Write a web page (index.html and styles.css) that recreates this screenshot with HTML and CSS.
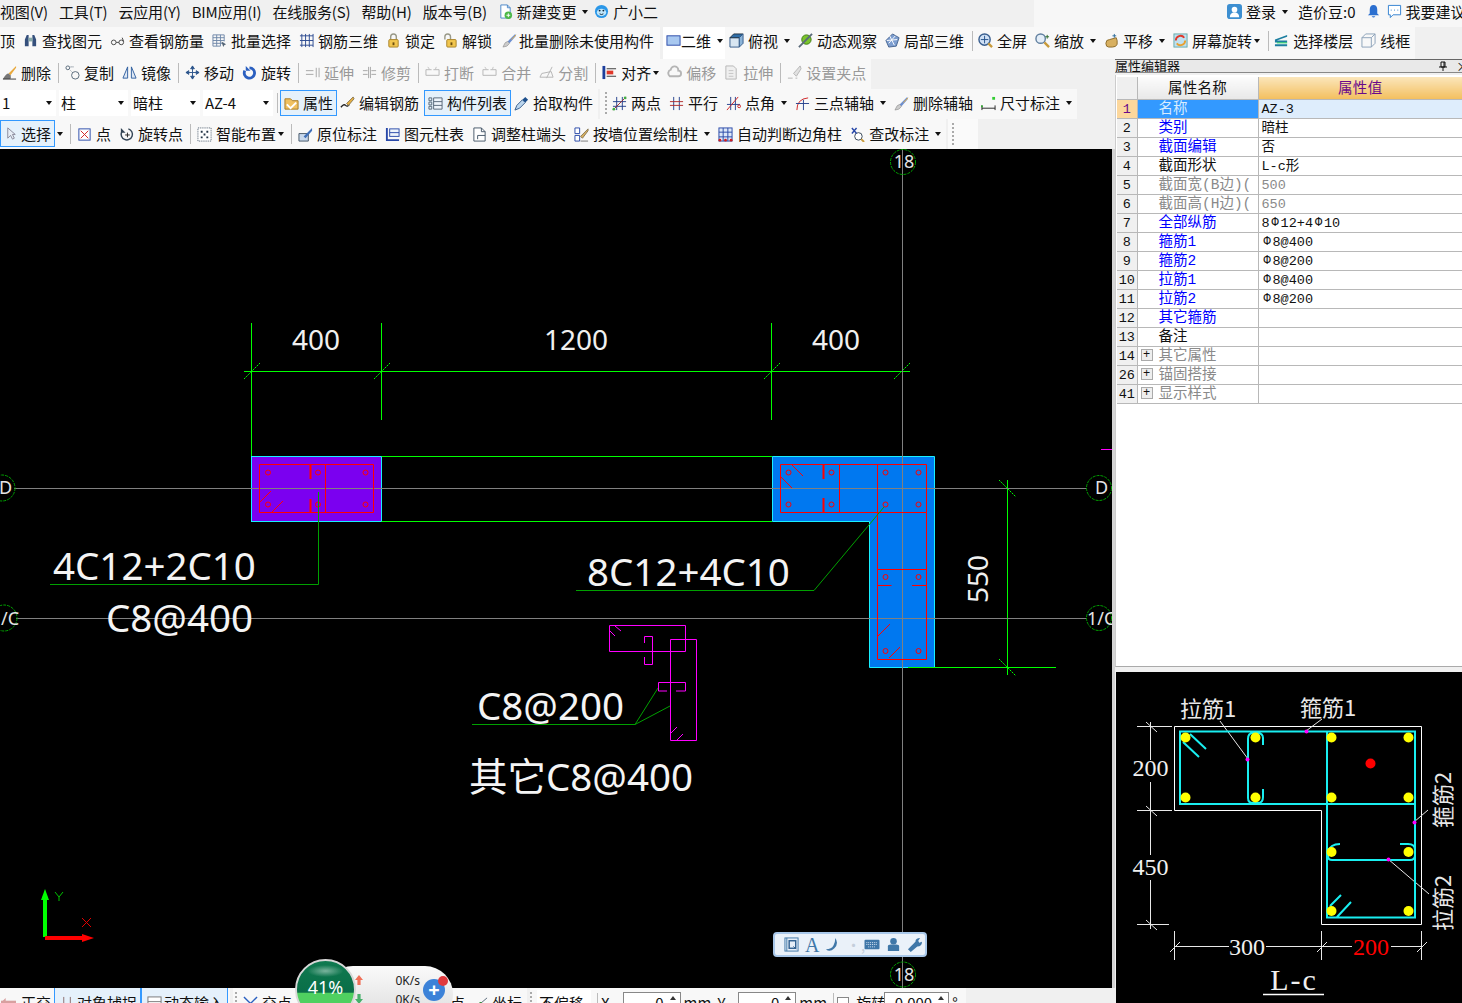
FILE: index.html
```html
<!DOCTYPE html>
<html lang="zh">
<head>
<meta charset="utf-8">
<title>属性编辑器</title>
<link rel="stylesheet" href="styles.css">
</head>
<body>
<svg class="defs" aria-hidden="true">
  <symbol id="newdoc" viewBox="0 0 16 16"><path d="M3 1h7l3 3v11H3z" fill="#fff" stroke="#4a86c8"/><path d="M10 1v3h3" fill="none" stroke="#4a86c8"/><circle cx="11" cy="12" r="4" fill="#4cb848"/><path d="M9 12h4M11 10v4" stroke="#fff"/></symbol>
  <symbol id="bot" viewBox="0 0 16 16"><circle cx="8" cy="8" r="7" fill="#2a97e8"/><ellipse cx="8" cy="9" rx="5" ry="4" fill="#bfe6fb"/><circle cx="6" cy="7" r="1" fill="#123"/><circle cx="10" cy="7" r="1" fill="#123"/><path d="M6 10.500q2 1.500 4 0" stroke="#123" fill="none"/></symbol>
  <symbol id="user" viewBox="0 0 16 16"><rect x="0" y="0" width="16" height="16" rx="3" fill="#3d8fd1"/><circle cx="8" cy="6" r="3" fill="#fff"/><path d="M3 14q0-5 5-5t5 5z" fill="#fff"/></symbol>
  <symbol id="bell" viewBox="0 0 16 16"><path d="M8 1q4 0 4 5v4l2 2H2l2-2V6q0-5 4-5z" fill="#2b6fd0"/><path d="M6 13q2 3 4 0z" fill="#2b6fd0"/></symbol>
  <symbol id="chat" viewBox="0 0 16 16"><path d="M1.500 1.500h13v10h-8l-3 3v-3h-2z" fill="#fff" stroke="#2f7fd0"/><path d="M4 6.500h1M7.500 6.500h1M11 6.500h1" stroke="#2f7fd0"/></symbol>
  <symbol id="find" viewBox="0 0 16 16"><path d="M2 14V7l2-5h2v12zM14 14V7l-2-5h-2v12z" fill="#35507c"/><rect x="6" y="5" width="4" height="4" fill="#8aa"/></symbol>
  <symbol id="glasses" viewBox="0 0 16 16"><circle cx="4" cy="10" r="2.500" fill="none" stroke="#444"/><circle cx="12" cy="10" r="2.500" fill="none" stroke="#444"/><path d="M6.500 10h3M13 5l1.500 4" stroke="#444"/></symbol>
  <symbol id="batch" viewBox="0 0 16 16"><path d="M1 2h12M1 5h12M1 8h12M1 11h12M1 14h8M1 2v12M5 2v12M9 2v12M13 2v7" stroke="#6e86a8" fill="none"/><path d="M10 9l5 3-2 1-1 2z" fill="#567"/></symbol>
  <symbol id="rebar3d" viewBox="0 0 16 16"><path d="M1 3h14M1 8h14M1 13h14M3 1v14M7 1v14M11 1v14M15 1v14" stroke="#2c4a90" fill="none"/></symbol>
  <symbol id="lock" viewBox="0 0 16 16"><path d="M5 7V4q0-3 3-3t3 3v3" fill="none" stroke="#998"  stroke-width="1.500"/><rect x="3" y="7" width="10" height="8" rx="1" fill="#f2c64e" stroke="#a8822a"/><rect x="7" y="10" width="2" height="3" fill="#6b4e10"/></symbol>
  <symbol id="unlock" viewBox="0 0 16 16"><path d="M2 7V4q0-3 3-3t3 3v3" fill="none" stroke="#998" stroke-width="1.500"/><rect x="4" y="7" width="10" height="8" rx="1" fill="#f2c64e" stroke="#a8822a"/><rect x="8" y="10" width="2" height="3" fill="#6b4e10"/></symbol>
  <symbol id="brush" viewBox="0 0 16 16"><path d="M14 1L6 9l2 2 7-8z" fill="#6d8fd0"/><path d="M15 2l-5 5" stroke="#e8b040"/><path d="M6 9q-3 0-5 6 5 0 7-4z" fill="#ccc" stroke="#777" stroke-width=".5"/></symbol>
  <symbol id="del" viewBox="0 0 16 16"><path d="M15 1L7 9l2 2 6-8z" fill="#e8a83c"/><path d="M7 9q-3 0-6 6h8q1-2 0-4z" fill="#777"/><path d="M1 15h14" stroke="#333"/></symbol>
  <symbol id="rect2d" viewBox="0 0 16 16"><rect x="1" y="3" width="14" height="10" fill="#a8c8f0" stroke="#2848a8"/></symbol>
  <symbol id="cube" viewBox="0 0 16 16"><path d="M1 5h10v10H1z" fill="#d8e6f2" stroke="#345c8a"/><path d="M1 5l4-4h10l-4 4z" fill="#2f6ea8" stroke="#234"/><path d="M11 5l4-4v10l-4 4z" fill="#8cb4d8" stroke="#345c8a"/></symbol>
  <symbol id="orbit" viewBox="0 0 16 16"><circle cx="9" cy="7" r="5" fill="#7ac52c" stroke="#3e7a12"/><path d="M1 15L15 1" stroke="#5a6a7a" stroke-width="2"/></symbol>
  <symbol id="local3d" viewBox="0 0 16 16"><path d="M8 1l7 4-3 9-8 1-3-7z" fill="#7d9ed0" stroke="#46648f"/><path d="M5 3l5 10M11 3L4 11M2 8l11-1" stroke="#fff"/></symbol>
  <symbol id="fit" viewBox="0 0 16 16"><circle cx="7" cy="7" r="6" fill="#cfe0f5" stroke="#3a5f8f" stroke-width="1.500"/><path d="M7 3v8M3 7h8" stroke="#24508a"/><path d="M11 11l4 4" stroke="#c89a3a" stroke-width="2.500"/></symbol>
  <symbol id="zoom" viewBox="0 0 16 16"><circle cx="6" cy="6" r="5" fill="#e4eef8" stroke="#607f9f" stroke-width="1.500"/><path d="M10 10l5 5" stroke="#c89a3a" stroke-width="2.500"/><path d="M13 2v4M11 4h4" stroke="#2a6a2a"/></symbol>
  <symbol id="pan" viewBox="0 0 16 16"><path d="M2 11q0-4 4-4l7-2 1 3v4q-1 3-5 3H5q-3 0-3-4z" fill="#d8b060" stroke="#8a6a2a"/><path d="M11 1v4M9 3h4" stroke="#2a6a9a"/></symbol>
  <symbol id="rotscreen" viewBox="0 0 16 16"><rect x="1" y="1" width="14" height="14" fill="#bfe0f0" stroke="#6aa"/><path d="M3 8a5 5 0 0 1 9-3" fill="none" stroke="#e0382a" stroke-width="2"/><path d="M13 8a5 5 0 0 1-9 3" fill="none" stroke="#e8a030" stroke-width="2"/></symbol>
  <symbol id="floors" viewBox="0 0 16 16"><path d="M1 7l13-5v2L3 8h11v2H1zM1 12h13v2H1z" fill="#1d7fa0"/><path d="M3 10.500h11" stroke="#1c5"/></symbol>
  <symbol id="wire" viewBox="0 0 16 16"><path d="M1 5h10v10H1zM1 5l4-4h10v10l-4 4M11 5l4-4" fill="none" stroke="#8aa0b8"/></symbol>
  <symbol id="copy" viewBox="0 0 16 16"><circle cx="3" cy="3" r="2" fill="none" stroke="#567"/><circle cx="11" cy="11" r="4" fill="none" stroke="#567"/><path d="M6 2h3M6 6l2 2" stroke="#567" stroke-dasharray="1 1"/></symbol>
  <symbol id="mirror" viewBox="0 0 16 16"><path d="M6 2L1 14h5zM10 2l5 12h-5z" fill="#dfe8f4" stroke="#2f5f9f"/></symbol>
  <symbol id="move" viewBox="0 0 16 16"><path d="M8 1v14M1 8h14M8 1L6 4h4zM8 15l-2-3h4zM1 8l3-2v4zM15 8l-3-2v4z" stroke="#2d558c" fill="#2d558c"/></symbol>
  <symbol id="rot" viewBox="0 0 16 16"><path d="M8 3a5.500 5.500 0 1 1-5 3" fill="none" stroke="#2a5fc0" stroke-width="3"/><path d="M4 1v5h5z" fill="#2a5fc0"/></symbol>
  <symbol id="extend" viewBox="0 0 16 16"><path d="M1 6h8M1 10h8M12 3v10M15 3v10" stroke="#999"/></symbol>
  <symbol id="trim" viewBox="0 0 16 16"><path d="M1 6h5M1 10h5M10 6h5M10 10h5M7 2v12M9 2v12" stroke="#999"/></symbol>
  <symbol id="brk" viewBox="0 0 16 16"><path d="M1 5h6M9 5h6M1 11h14M1 5v6M15 5v6" stroke="#aaa" fill="none"/><path d="M3 2l2 3M12 2l-1 3" stroke="#bbb"/></symbol>
  <symbol id="split" viewBox="0 0 16 16"><path d="M1 13h14L13 7 3 9zM8 14L14 2" stroke="#aaa" fill="none"/></symbol>
  <symbol id="align" viewBox="0 0 16 16"><path d="M2 1v14" stroke="#1d3f9c" stroke-width="3"/><path d="M5 4h10M5 12h10" stroke="#333"/><rect x="5" y="6" width="7" height="4" fill="#e0382a"/></symbol>
  <symbol id="offset" viewBox="0 0 16 16"><path d="M3 12a4 4 0 0 1 1-7 4 4 0 0 1 8 1 3 3 0 0 1 0 6z" fill="none" stroke="#aaa" stroke-width="2"/></symbol>
  <symbol id="stretch" viewBox="0 0 16 16"><path d="M2 1h8l3 3v11H2z" fill="#eee" stroke="#aaa"/><path d="M5 6h5M5 9h5M5 12h5" stroke="#bbb"/></symbol>
  <symbol id="setgrip" viewBox="0 0 16 16"><path d="M1 14h5M9 14h2" stroke="#aaa"/><path d="M14 1L7 9l3 3 5-8z" fill="#ddd" stroke="#aaa"/></symbol>
  <symbol id="attr" viewBox="0 0 16 16"><path d="M1 3h6l2 2h6v9H1z" fill="#f0c060" stroke="#a87a22"/><path d="M3 9l4 4 6-6" stroke="#fff" fill="none" stroke-width="2"/></symbol>
  <symbol id="editbar" viewBox="0 0 16 16"><path d="M1 12q3-4 5-2t4-1" fill="none" stroke="#222" stroke-width="1.500"/><path d="M14 1L7 8l2 2 6-7z" fill="#e8b040" stroke="#875"/></symbol>
  <symbol id="list" viewBox="0 0 16 16"><path d="M1 2h3v3H1zM1 6.500h3v3H1zM1 11h3v3H1z" fill="none" stroke="#567"/><path d="M6 2h9v12H6zM6 6h9M6 10h9" fill="#eef4fb" stroke="#567"/></symbol>
  <symbol id="pick" viewBox="0 0 16 16"><path d="M1 15l2-5 6-6 3 3-6 6z" fill="#bcd6ee" stroke="#345c8a"/><path d="M9 4l3-3 3 3-3 3z" fill="#1d4f8c"/></symbol>
  <symbol id="twopt" viewBox="0 0 16 16"><path d="M5 1v14M11 1v14M1 6h14M1 11h14" stroke="#23408c"/><path d="M1 15L15 1" stroke="#9c2a2a"/><circle cx="2" cy="14" r="1.500" fill="#4a4"/><circle cx="14" cy="2" r="1.500" fill="#4a4"/></symbol>
  <symbol id="parallel" viewBox="0 0 16 16"><path d="M5 1v14M11 1v14" stroke="#23408c"/><path d="M1 6h14M1 10h14" stroke="#b02a2a"/></symbol>
  <symbol id="ptangle" viewBox="0 0 16 16"><path d="M5 1v14M10 1v14M1 9h14" stroke="#23408c"/><path d="M1 15L13 1" stroke="#d02020"/><circle cx="14" cy="11" r="1.500" fill="none" stroke="#d02020"/></symbol>
  <symbol id="threept" viewBox="0 0 16 16"><path d="M2 15q0-12 12-13" fill="none" stroke="#d02020"/><path d="M1 8h14M9 4v11" stroke="#23408c"/></symbol>
  <symbol id="dim" viewBox="0 0 16 16"><path d="M1 10v5M15 10v5M1 13h14" stroke="#222"/><rect x="0" y="10" width="2" height="2" fill="#3a3"/><rect x="12" y="1" width="3" height="3" fill="#3c3"/></symbol>
  <symbol id="sel" viewBox="0 0 16 16"><path d="M4 2v11l3-3 2 4 2-1-2-4h3z" fill="#e8eef6" stroke="#889"/></symbol>
  <symbol id="pt" viewBox="0 0 16 16"><rect x="2" y="2" width="12" height="12" fill="#fff" stroke="#2848a8"/><path d="M4 4l8 8M12 4l-8 8" stroke="#d02020"/></symbol>
  <symbol id="rotpt" viewBox="0 0 16 16"><path d="M10 2a6 6 0 1 1-7 3" fill="none" stroke="#345" stroke-width="1.500"/><path d="M2 1v5h5z" fill="#345"/><path d="M9 6v5M6.500 8.500h5" stroke="#222"/></symbol>
  <symbol id="smart" viewBox="0 0 16 16"><rect x="1" y="1" width="14" height="14" fill="#fff" stroke="#456" stroke-dasharray="1 1"/><path d="M4 4h2v2H4zM10 4h2v2h-2zM4 10h2v2H4zM10 10h2v2h-2zM7 7h2v2H7z" fill="#234"/></symbol>
  <symbol id="inplace" viewBox="0 0 16 16"><path d="M1 7h10v8H1z" fill="#c8d8ec" stroke="#456"/><path d="M15 1L6 10l2 2 7-8z" fill="#3f6fb8"/></symbol>
  <symbol id="table" viewBox="0 0 16 16"><path d="M2 1v13h13" fill="none" stroke="#2848a8" stroke-width="2"/><rect x="5" y="2" width="10" height="8" fill="#eef4fb" stroke="#2848a8"/><path d="M5 6h10" stroke="#2848a8"/></symbol>
  <symbol id="adjust" viewBox="0 0 16 16"><path d="M2 1h8l4 4v10H2z" fill="#fff" stroke="#456"/><path d="M10 1v4h4M14 9H6v4" fill="none" stroke="#456"/></symbol>
  <symbol id="wallpos" viewBox="0 0 16 16"><path d="M1 1h5v6H1zM1 9h5v6H1z" fill="#fff" stroke="#2848a8"/><path d="M7 15h8" stroke="#777"/><path d="M15 2L7 10l2 2 6-8z" fill="#d8b060" stroke="#875"/></symbol>
  <symbol id="auto" viewBox="0 0 16 16"><rect x="1" y="1" width="14" height="14" fill="#dde8f8" stroke="#2848a8"/><path d="M5.500 1v14M10.500 1v14M1 5.500h14M1 10.500h14" stroke="#2848a8"/><circle cx="2" cy="14" r="1.500" fill="#d02020"/><circle cx="8" cy="14" r="1.500" fill="#d02020"/><circle cx="14" cy="14" r="1.500" fill="#d02020"/></symbol>
  <symbol id="check" viewBox="0 0 16 16"><circle cx="9" cy="10" r="4" fill="#fff" stroke="#345"/><path d="M12 13l3 3" stroke="#c89a3a" stroke-width="2"/><path d="M2 1l5 6M7 1L2 7" stroke="#2848a8" stroke-width="1.500"/></symbol>
  <symbol id="ortho" viewBox="0 0 16 16"><path d="M0 5h16v5H0z" fill="#d8a0a0"/><path d="M0 7l5-5v11z" fill="#d8a0a0"/></symbol>
  <symbol id="snap" viewBox="0 0 16 16"><path d="M4 1v14M11 1v14" stroke="#8a6a6a"/><path d="M1 12h14" stroke="#a03030"/></symbol>
  <symbol id="dyn" viewBox="0 0 16 16"><rect x="1" y="1" width="14" height="14" fill="#fff" stroke="#777"/><path d="M1 6h14" stroke="#777"/></symbol>
  <symbol id="cross" viewBox="0 0 16 16"><path d="M1 1l14 14M15 1L1 15" stroke="#2a5fc0" stroke-width="1.500"/></symbol>
  <symbol id="mid" viewBox="0 0 16 16"><path d="M1 14L15 2" stroke="#567"/><circle cx="8" cy="8" r="1.500" fill="#2a8a2a"/></symbol>
</svg>

<div class="app">
  <div class="menubar">
    <nav class="menu">
      <span>视图(V)</span><span>工具(T)</span><span>云应用(Y)</span><span>BIM应用(I)</span><span>在线服务(S)</span><span>帮助(H)</span><span>版本号(B)</span>
      <span class="it m-new"><svg class="ic"><use href="#newdoc"/></svg>新建变更<i class="caret"></i></span>
      <span class="it"><svg class="ic"><use href="#bot"/></svg>广小二</span>
    </nav>
    <div class="account">
      <span class="it"><svg class="ic"><use href="#user"/></svg>登录<i class="caret"></i></span>
      <span>造价豆:0</span>
      <svg class="ic a-bell"><use href="#bell"/></svg>
      <span class="it"><svg class="ic"><use href="#chat"/></svg>我要建议</span>
    </div>
  </div>

  <div class="tb tb-view">
    <div class="band">
      <span class="it">顶</span>
      <span class="it"><svg class="ic"><use href="#find"/></svg>查找图元</span>
      <span class="it"><svg class="ic"><use href="#glasses"/></svg>查看钢筋量</span>
      <span class="it"><svg class="ic"><use href="#batch"/></svg>批量选择</span>
      <span class="it"><svg class="ic"><use href="#rebar3d"/></svg>钢筋三维</span>
      <span class="it"><svg class="ic"><use href="#lock"/></svg>锁定</span>
      <span class="it"><svg class="ic"><use href="#unlock"/></svg>解锁</span>
      <span class="it narrow"><svg class="ic"><use href="#brush"/></svg>批量删除未使用构件</span>
    </div>
    <div class="band">
      <span class="it white"><svg class="ic"><use href="#rect2d"/></svg>二维<i class="caret"></i></span>
      <span class="it"><svg class="ic"><use href="#cube"/></svg>俯视<i class="caret"></i></span>
      <span class="it"><svg class="ic"><use href="#orbit"/></svg>动态观察</span>
      <span class="it"><svg class="ic"><use href="#local3d"/></svg>局部三维</span>
      <i class="sep"></i>
      <span class="it"><svg class="ic"><use href="#fit"/></svg>全屏</span>
      <span class="it"><svg class="ic"><use href="#zoom"/></svg>缩放<i class="caret"></i></span>
      <span class="it"><svg class="ic"><use href="#pan"/></svg>平移<i class="caret"></i></span>
      <span class="it"><svg class="ic"><use href="#rotscreen"/></svg>屏幕旋转<i class="caret tight"></i></span>
      <i class="sep"></i>
      <span class="it"><svg class="ic"><use href="#floors"/></svg>选择楼层</span>
      <span class="it"><svg class="ic"><use href="#wire"/></svg>线框</span>
    </div>
  </div>

  <div class="work">
    <div class="left">
      <div class="tb tb-edit">
        <div class="band">
          <span class="it"><svg class="ic"><use href="#del"/></svg>删除</span><i class="sep"></i>
          <span class="it"><svg class="ic"><use href="#copy"/></svg>复制</span>
          <span class="it"><svg class="ic"><use href="#mirror"/></svg>镜像</span><i class="sep"></i>
          <span class="it"><svg class="ic"><use href="#move"/></svg>移动</span>
          <span class="it"><svg class="ic"><use href="#rot"/></svg>旋转</span><i class="sep"></i>
          <span class="it off"><svg class="ic"><use href="#extend"/></svg>延伸</span>
          <span class="it off"><svg class="ic"><use href="#trim"/></svg>修剪</span><i class="sep"></i>
          <span class="it off"><svg class="ic"><use href="#brk"/></svg>打断</span>
          <span class="it off"><svg class="ic"><use href="#brk"/></svg>合并</span>
          <span class="it off"><svg class="ic"><use href="#split"/></svg>分割</span><i class="sep"></i>
          <span class="it"><svg class="ic"><use href="#align"/></svg>对齐<i class="caret tight"></i></span>
          <span class="it off"><svg class="ic"><use href="#offset"/></svg>偏移</span>
          <span class="it off"><svg class="ic"><use href="#stretch"/></svg>拉伸</span><i class="sep"></i>
          <span class="it off"><svg class="ic"><use href="#setgrip"/></svg>设置夹点</span>
        </div>
      </div>

      <div class="tb tb-comp">
        <div class="band band-a">
          <span class="pick p1">1<i class="caret"></i></span>
          <span class="pick p2">柱<i class="caret"></i></span>
          <span class="pick p2">暗柱<i class="caret"></i></span>
          <span class="pick p3">AZ-4<i class="caret"></i></span>
          <i class="sep"></i>
          <span class="it btn"><svg class="ic"><use href="#attr"/></svg>属性</span>
          <span class="it"><svg class="ic"><use href="#editbar"/></svg>编辑钢筋</span>
          <span class="it btn btn-list"><svg class="ic"><use href="#list"/></svg>构件列表</span>
          <span class="it"><svg class="ic"><use href="#pick"/></svg>拾取构件</span>
        </div>
        <div class="band band-b">
          <i class="grip"></i>
          <span class="it"><svg class="ic"><use href="#twopt"/></svg>两点</span>
          <span class="it"><svg class="ic"><use href="#parallel"/></svg>平行</span>
          <span class="it"><svg class="ic"><use href="#ptangle"/></svg>点角<i class="caret"></i></span>
          <span class="it"><svg class="ic"><use href="#threept"/></svg>三点辅轴<i class="caret"></i></span>
          <span class="it"><svg class="ic"><use href="#brush"/></svg>删除辅轴</span>
          <span class="it"><svg class="ic"><use href="#dim"/></svg>尺寸标注<i class="caret"></i></span>
        </div>
      </div>

      <div class="tb tb-draw">
        <div class="band">
          <span class="it btn btn-sel"><svg class="ic"><use href="#sel"/></svg>选择</span><i class="caret solo"></i><i class="sep"></i>
          <span class="it"><svg class="ic"><use href="#pt"/></svg>点</span>
          <span class="it"><svg class="ic"><use href="#rotpt"/></svg>旋转点</span><i class="sep"></i>
          <span class="it"><svg class="ic"><use href="#smart"/></svg>智能布置<i class="caret tight"></i></span><i class="sep"></i>
          <span class="it"><svg class="ic"><use href="#inplace"/></svg>原位标注</span>
          <span class="it"><svg class="ic"><use href="#table"/></svg>图元柱表</span>
          <span class="it"><svg class="ic"><use href="#adjust"/></svg>调整柱端头</span>
          <span class="it"><svg class="ic"><use href="#wallpos"/></svg>按墙位置绘制柱<i class="caret"></i></span>
          <span class="it"><svg class="ic"><use href="#auto"/></svg>自动判断边角柱</span>
          <span class="it"><svg class="ic"><use href="#check"/></svg>查改标注<i class="caret"></i></span>
        </div>
        <div class="band band-grip"><i class="grip"></i></div>
      </div>

      <div class="canvas">
        <svg class="cad" viewBox="0 149 1112 839" aria-label="柱截面图">
          <g class="c-fill-p"><rect x="251.500" y="456.500" width="130" height="65"/></g>
          <path class="c-fill-b" d="M772.500 456.500H934.500V667.500H869.500V521.500H772.500Z"/>
          <path class="c-green" d="M251.500 323V456M381.500 323V420M771.500 323V420M902.500 320V464M244 371.500H910M381.500 456.500H772M381.500 521.500H772M909 488.500H1056M908 667.500H1056M1007.500 480V675"/>
          <path class="c-green-t" d="M244 379L260 363M374 379L390 363M764 379L780 363M894 379L910 363M999 480L1016 497M999 659L1016 676"/>
          <path class="c-axis" d="M902.500 149V988M14 488.500H1087M16 618.500H1087"/>
          <path class="c-red" d="M259.500 464.500H373.500V512.500H259.500ZM325.500 464.500V512.500M260 502L271 491M272 512L283 501M780.500 464.500H926.500V512.500H780.500ZM877.500 464.500V659.500H926.500V512.500M839.500 464.500V512.500M877.500 569.500H926.500M877.500 585.500H891.500M912 585.500H926.500M792 465L803 476M781 477L792 488M878 636L890 624M889 658L900 647"/>
          <path class="c-red2" d="M310.500 464V479M310.500 499V512M823.500 464V479M823.500 498V512"/>
          <g class="c-rebar">
            <circle cx="268" cy="472.500" r="2.500"/><circle cx="318" cy="472.500" r="2.500"/><circle cx="365.500" cy="472.500" r="2.500"/><circle cx="268" cy="504.500" r="2.500"/><circle cx="318" cy="504.500" r="2.500"/><circle cx="365.500" cy="504.500" r="2.500"/>
            <circle cx="788.500" cy="472.500" r="2.500"/><circle cx="831.500" cy="472.500" r="2.500"/><circle cx="885.500" cy="472.500" r="2.500"/><circle cx="918.500" cy="472.500" r="2.500"/><circle cx="788.500" cy="504.500" r="2.500"/><circle cx="831.500" cy="504.500" r="2.500"/><circle cx="885.500" cy="504.500" r="2.500"/><circle cx="918.500" cy="504.500" r="2.500"/><circle cx="885.500" cy="577" r="2.500"/><circle cx="918.500" cy="577" r="2.500"/><circle cx="885.500" cy="651" r="2.500"/><circle cx="918.500" cy="651" r="2.500"/>
          </g>
          <path class="c-lead" d="M318.500 492V584.500H50M884 507L814 590.500H576M472 724.500H635L658 688M635 724.500L670 706"/>
          <path class="c-mag" d="M609.500 625.500H685.500V651.500H609.500ZM670.500 639.500H696.500V740.500H670.500ZM644.500 643V636.500H652.500V664.500H644.500V657M658.500 691V682.500H685.500V691M658.500 691H667M676 691H685.500M615 626L621 631M610 631L615 636M671 733L677 727M677 740L683 734M1101 449.500H1112"/>

          <circle class="c-bub" cx="903" cy="162" r="12.500"/><circle class="c-bub" cx="903" cy="974.500" r="12.500"/>
          <circle class="c-bub" cx="2" cy="488" r="13"/><circle class="c-bub" cx="4" cy="618" r="13"/>
          <circle class="c-bub" cx="1099" cy="488" r="12.500"/><circle class="c-bub" cx="1099" cy="618" r="12.500"/>
          <text class="t-ax" x="904" y="168" text-anchor="middle">18</text>
          <text class="t-ax" x="904" y="981" text-anchor="middle">18</text>
          <text class="t-ax" x="-1" y="494">D</text>
          <text class="t-ax" x="1" y="625">/C</text>
          <text class="t-ax" x="1095" y="494">D</text>
          <text class="t-ax" x="1087" y="625">1/C</text>

          <text class="t-dim" x="316" y="350" text-anchor="middle">400</text>
          <text class="t-dim" x="576" y="350" text-anchor="middle">1200</text>
          <text class="t-dim" x="836" y="350" text-anchor="middle">400</text>
          <text class="t-dim" transform="translate(988 579) rotate(-90)" text-anchor="middle">550</text>

          <text class="t-big" x="53" y="580">4C12+2C10</text>
          <text class="t-big" x="106" y="632">C8@400</text>
          <text class="t-big" x="587" y="586">8C12+4C10</text>
          <text class="t-big" x="477" y="720">C8@200</text>
          <text class="t-big" x="469" y="791">其它C8@400</text>

          <path class="c-y" d="M45 937V898"/><path class="c-yh" d="M45 889L41 900H49Z"/>
          <path class="c-x" d="M45 938H84"/><path class="c-xh" d="M94 938L82 934V942Z"/>
          <path class="c-yl" d="M55 892L59 897L63 892M59 897V901"/>
          <path class="c-xl" d="M82 918L91 927M91 918L82 927"/>
        </svg>

        <div class="float">
          <span class="fb fb-on"><svg viewBox="0 0 16 16"><rect x="1" y="1" width="14" height="14" fill="#e6eef8" stroke="#3f77a8"/><path d="M3 1v14" stroke="#3f77a8"/><rect x="5.500" y="4" width="7" height="8" fill="none" stroke="#2f5f90" stroke-width="1.500"/><path d="M10 10l3 3" stroke="#2f5f90"/></svg></span>
          <span class="fb-a">A</span>
          <svg class="fb" viewBox="0 0 16 16"><path d="M11 1q4 6-1 11t-9 1q6 0 8-4t2-8z" fill="#3f77a8"/></svg>
          <span class="fb-dots">·,</span>
          <svg class="fb fb-k" viewBox="0 0 16 16"><rect x="0" y="3" width="16" height="10" rx="1" fill="#3f77a8"/><path d="M2 6h12M2 8h12M4 10.500h8" stroke="#dce8f5" stroke-dasharray="1 1"/></svg>
          <svg class="fb" viewBox="0 0 16 16"><circle cx="8" cy="4.500" r="3.500" fill="#3f77a8"/><path d="M2 15V10q0-2 3-2h6q3 0 3 2v5z" fill="#3f77a8"/></svg>
          <svg class="fb" viewBox="0 0 16 16"><path d="M1 13l8-8q0-4 5-4l-2 3 1 2 3-1q0 5-5 5l-7 6z" fill="#3f77a8"/></svg>
        </div>
      </div>

      <div class="status">
        <div class="band band-s1">
          <span class="it"><svg class="ic"><use href="#ortho"/></svg>正交</span>
          <span class="it btn btn-s"><svg class="ic"><use href="#snap"/></svg>对象捕捉</span>
          <span class="it btn btn-s"><svg class="ic"><use href="#dyn"/></svg>动态输入</span>
        </div>
        <div class="band band-s2">
          <i class="grip"></i>
          <span class="it"><svg class="ic"><use href="#cross"/></svg>交点</span>
          <span class="it s-end">点</span>
          <span class="it"><svg class="ic"><use href="#mid"/></svg>坐标</span>
        </div>
        <div class="band band-s3">
          <i class="grip"></i>
          <span class="pick p4">不偏移</span>
          <i class="sep"></i>
          <span class="lab">X</span><span class="num n1">0</span><span class="lab">mm</span>
          <span class="lab lab-y">Y</span><span class="num n1">0</span><span class="lab">mm</span>
          <i class="sep sep-r"></i>
          <i class="box"></i>
          <span class="lab">旋转</span><span class="num n2">0.000</span><span class="lab">°</span>
        </div>
      </div>
    </div>

    <aside class="panel">
      <header class="ph"><span>属性编辑器</span><span class="ph-btns"><svg class="pin" viewBox="0 0 10 10"><path d="M3 1h4v5H3zM1 6h8M5 6v4M6 1v5" stroke="#111" fill="none"/></svg><span class="ph-x">×</span></span></header>
      <div class="props">
        <table class="grid">
          <colgroup><col class="c0"><col class="c1"><col></colgroup>
          <thead><tr><th></th><th>属性名称</th><th class="hv">属性值</th></tr></thead>
          <tbody>
            <tr class="cur"><td class="n">1</td><td class="k">名称</td><td class="v">AZ-3</td></tr>
            <tr><td class="n">2</td><td class="k b">类别</td><td class="v">暗柱</td></tr>
            <tr><td class="n">3</td><td class="k b">截面编辑</td><td class="v">否</td></tr>
            <tr><td class="n">4</td><td class="k">截面形状</td><td class="v">L-c形</td></tr>
            <tr><td class="n">5</td><td class="k g">截面宽(B边)(</td><td class="v g">500</td></tr>
            <tr><td class="n">6</td><td class="k g">截面高(H边)(</td><td class="v g">650</td></tr>
            <tr><td class="n">7</td><td class="k b">全部纵筋</td><td class="v">8<span class="rb">Φ</span>12+4<span class="rb">Φ</span>10</td></tr>
            <tr><td class="n">8</td><td class="k b">箍筋1</td><td class="v"><span class="rb">Φ</span>8@400</td></tr>
            <tr><td class="n">9</td><td class="k b">箍筋2</td><td class="v"><span class="rb">Φ</span>8@200</td></tr>
            <tr><td class="n">10</td><td class="k b">拉筋1</td><td class="v"><span class="rb">Φ</span>8@400</td></tr>
            <tr><td class="n">11</td><td class="k b">拉筋2</td><td class="v"><span class="rb">Φ</span>8@200</td></tr>
            <tr><td class="n">12</td><td class="k b">其它箍筋</td><td class="v"></td></tr>
            <tr><td class="n">13</td><td class="k">备注</td><td class="v"></td></tr>
            <tr><td class="n">14</td><td class="k g"><i class="plus">+</i>其它属性</td><td class="v"></td></tr>
            <tr><td class="n">26</td><td class="k g"><i class="plus">+</i>锚固搭接</td><td class="v"></td></tr>
            <tr><td class="n">41</td><td class="k g"><i class="plus">+</i>显示样式</td><td class="v"></td></tr>
          </tbody>
        </table>
      </div>
      <div class="preview">
        <svg class="sec" viewBox="1116 672 346 331" aria-label="截面配筋图">
          <path class="p-white" d="M1174.500 726.500H1421.500V924.500H1321.500V810.500H1174.500Z"/>
          <path class="p-thin" d="M1150.500 722V760M1150.500 782V855M1150.500 880V929M1137 726.500H1172M1137 810.500H1172M1137 924.500H1169M1146 722L1157 732M1146 806L1157 816M1146 920L1157 930M1174.500 931V960M1321.500 931V960M1421.500 931V960M1174.500 946.500H1229M1266 946.500H1352M1391 946.500H1421.500M1170 952L1180 942M1317 952L1327 942M1417 952L1427 942M1248 759L1220 721M1306 731L1322 719M1414 822L1428 810M1388 859L1429 894"/>
          <path class="p-cy" d="M1180 731.500H1415V917.500H1327V804H1180ZM1327 731.500V804H1415M1263 745V738Q1263 733 1257 733H1253Q1248 733 1248 739V798Q1248 803 1253 803H1258Q1263 803 1263 797V789M1340 844Q1330 844 1328 852V856Q1328 860 1332 860H1410Q1415 860 1415 855V850Q1415 844 1408 844H1400M1190 734L1206 749M1183 742L1199 757M1330 906L1341 895M1337 917L1351 902"/>
          <g class="p-y">
            <circle cx="1185.500" cy="737.500" r="5"/><circle cx="1255.500" cy="737.500" r="5"/><circle cx="1331.500" cy="737.500" r="5"/><circle cx="1408.500" cy="737.500" r="5"/>
            <circle cx="1185.500" cy="797.500" r="5"/><circle cx="1255.500" cy="797.500" r="5"/><circle cx="1331.500" cy="797.500" r="5"/><circle cx="1408.500" cy="797.500" r="5"/>
            <circle cx="1331.500" cy="852" r="5"/><circle cx="1408.500" cy="852" r="5"/><circle cx="1331.500" cy="911" r="5"/><circle cx="1408.500" cy="911" r="5"/>
          </g>
          <circle class="p-r" cx="1370.500" cy="763.500" r="5"/>
          <g class="p-m"><circle cx="1306.500" cy="731.500" r="2"/><circle cx="1247.500" cy="759.500" r="2"/><circle cx="1414.500" cy="822.500" r="2"/><circle cx="1388.500" cy="859.500" r="2"/></g>
          <text class="p-cn" x="1180" y="717">拉筋1</text>
          <text class="p-cn" x="1300" y="716">箍筋1</text>
          <text class="p-cn" transform="translate(1451 828) rotate(-90)">箍筋2</text>
          <text class="p-cn" transform="translate(1451 931) rotate(-90)">拉筋2</text>
          <text class="p-num" x="1150.500" y="776" text-anchor="middle">200</text>
          <text class="p-num" x="1150.500" y="875" text-anchor="middle">450</text>
          <text class="p-num" x="1247" y="955" text-anchor="middle">300</text>
          <text class="p-num p-red" x="1371" y="955" text-anchor="middle">200</text>
          <text class="p-title" x="1294" y="990" text-anchor="middle">L-c</text>
          <path class="p-ul" d="M1263 994.500H1324"/>
        </svg>
      </div>
    </aside>
  </div>

  <div class="speed">
    <div class="pill">
      <div class="sp-col">
        <span class="sp-row"><i class="up"></i><b>0K/s</b></span>
        <span class="sp-row"><i class="down"></i><b>0K/s</b></span>
      </div>
      <span class="boost">+<i class="dot"></i></span>
    </div>
    <div class="ball"><span>41%</span></div>
  </div>
</div>
</body>
</html>
```

FILE: styles.css
```css
* { box-sizing: border-box; }
html, body { margin: 0; padding: 0; height: 100%; overflow: hidden; background: #f0f0f0; }
body { font: 15px/20px "Noto Sans CJK SC", "Noto Sans", sans-serif; color: #111; }
.defs { position: absolute; width: 0; height: 0; }

.app { position: relative; display: flex; flex-direction: column; width: 1462px; height: 1003px; overflow: hidden; }

.menubar { flex: 0 0 27px; display: flex; justify-content: space-between; align-items: center; white-space: nowrap; padding-bottom: 4px;
  background: linear-gradient(90deg, #f0f0f0 0, #f0f0f0 1034px, #f7f7f7 1034px); }
.menu { display: flex; align-items: center; gap: 11px; letter-spacing: -.15px; }
.m-new { margin-right: -5px; }
.account { display: flex; align-items: center; gap: 10px; width: 235px; overflow: hidden; flex: none; }

.it { display: inline-flex; align-items: center; white-space: nowrap; flex: none; }
.ic { width: 15px; height: 15px; flex: none; margin-right: 4px; }
.account .a-bell { margin-right: -4px; }
.caret { display: inline-block; width: 0; height: 0; margin: 0 0 0 6px; border: 3px solid transparent; border-top: 4px solid #111; border-bottom: 0; flex: none; }
.caret.tight { margin: 0 0 0 2px; }
.caret.solo { margin: 0 0 0 -6px; }

.tb { flex: 0 0 30px; display: flex; gap: 2px; background: #f0f0f0; overflow: hidden; white-space: nowrap; }
.tb-view { flex: 0 0 32px; }
.band { display: flex; align-items: center; gap: 8px; background: #f8f8f8; flex: none; }
.tb-view .band { padding-bottom: 5px; }
.tb-view .band:first-child { width: 660px; }
.tb-view .band:nth-child(2) { margin-left: 1px; padding-left: 5px; padding-right: 5px; }
.tb-view .sep { margin: 0 -3px 0 0; }
.narrow .ic { margin: 0 2px; }
.white { background: #fff; height: 32px; align-self: flex-start; margin: 0 -4px 0 -5px; padding: 0 2px 5px 3px; }
.white .ic { margin-right: 0; }

.tb-edit .band { width: 871px; padding: 0 0 3px 2px; }
.sep { display: block; flex: none; width: 1px; height: 20px; margin: 0 -2px 0 -1px; background: #bbb; }
.off { color: #999; }
.off .ic { opacity: .85; }

.band-a { width: 598px; gap: 3px; padding-bottom: 2px; }
.pick { display: flex; align-items: center; justify-content: space-between; height: 26px; background: #fff; padding-left: 2px; flex: none; }
.pick .caret { margin: 0 4px; }
.p1 { width: 56px; }
.p2 { width: 69px; }
.p3 { width: 70px; }
.band-a .sep { margin: 0 -1px 0 1px; }
.btn { border: 1px solid #3399ff; background: #e5f1fb; height: 26px; padding: 0 3px; }
.btn-list { margin-left: 2px; }
.band-b { width: 477px; gap: 8px; padding: 0 0 2px 5px; }
.band-b .grip { margin-right: -3px; }
.grip { display: block; width: 2px; height: 22px; flex: none; background: repeating-linear-gradient(#aaa 0 2px, transparent 2px 4px); }
.tb-draw { flex: 0 0 30px; }
.tb-draw .band:first-child { width: 946px; height: 30px; }
.btn-sel { height: 27px; width: 55px; padding-left: 3px; margin-top: -1px; }
.btn-sel .ic { margin-right: 2px; }
.band-grip { width: 30px; padding-left: 4px; background: #fafafa; }

.left { width: 1115px; flex: none; display: flex; flex-direction: column; }
.work { flex: 1; min-height: 0; display: flex; }

.canvas { position: relative; flex: 0 0 839px; width: 1115px; background: #000; border-right: 3px solid #d4d4d4; }
.cad { display: block; width: 1112px; height: 839px; background: #000; }

.c-fill-p { fill: #7b00f0; stroke: #19f0ff; }
.c-fill-b { fill: #0078f0; stroke: #19f0ff; }
.c-green { fill: none; stroke: #00ff00; }
.c-green-t { fill: none; stroke: #00ff00; stroke-dasharray: 2 1; }
.c-axis { fill: none; stroke: #808080; }
.c-red { fill: none; stroke: #ff0000; }
.c-red2 { fill: none; stroke: #ff0000; stroke-width: 2; }
.c-rebar { fill: none; stroke: #ff0000; }
.c-lead { fill: none; stroke: #00a000; }
.c-mag { fill: none; stroke: #ff00ff; }
.c-bub { fill: none; stroke: #00a000; stroke-dasharray: 3 1; }
.t-ax { font: 18px "Noto Sans", sans-serif; fill: #e4e4e4; }
.t-dim { font: 28px "Noto Sans", sans-serif; fill: #f0f0f0; }
.t-big { font: 38.500px "Noto Sans", "Noto Sans CJK SC", sans-serif; fill: #f4f4f4; }
.c-y { stroke: #00ff00; stroke-width: 4; fill: none; }
.c-yh { fill: #00ff00; }
.c-x { stroke: #ff0000; stroke-width: 4; fill: none; }
.c-xh { fill: #ff0000; }
.c-yl { stroke: #00c000; fill: none; }
.c-xl { stroke: #e00000; fill: none; }

.float { position: absolute; left: 773px; top: 783px; width: 154px; height: 25px; display: flex; align-items: center; gap: 6px; padding: 0 8px 0 9px;
  background: #eaf1f9; border: 2px solid #a9c8ea; border-radius: 4px; }
.fb { width: 15px; height: 15px; flex: none; display: block; }
.fb svg { width: 15px; height: 15px; display: block; }
.fb-k { width: 16px; }
.fb-a { font: 20px/20px "Liberation Serif", serif; color: #3f77a8; width: 14px; }
.fb-dots { width: 12px; color: #c4cedb; line-height: 12px; }

.status { flex: 0 0 30px; display: flex; gap: 3px; background: #f0f0f0; white-space: nowrap; overflow: hidden; }
.status .band { height: 30px; }
.band-s1 { width: 230px; gap: 3px; }
.band-s1 > .it:first-child .ic { margin-left: 1px; margin-right: 5px; }
.btn-s { height: 32px; padding: 0 0 0 5px; margin: 0 -3px 0 0; width: 87px; }
.btn-s:first-of-type { margin-left: 1px; }
.btn-s .ic { margin-right: 2px; }
.band-s2 { width: 294px; gap: 8px; padding-left: 2px; }
.band-s2 .grip { margin-right: -2px; }
.s-end { margin-left: 150px; }
.band-s3 { gap: 3px; padding: 0 8px 0 0; background: #f8f8f8; }
.p4 { width: 54px; margin: 0 3px 0 2px; }
.band-s3 .sep { margin: 0; }
.band-s3 .sep-r { margin-left: 3px; }
.lab-y { margin-left: 3px; }
.num { position: relative; display: block; align-self: flex-start; height: 30px; margin-top: 4px; border: 1px solid #888; background: #fff; text-align: right; padding-right: 16px; flex: none; }
.num::after { content: ""; position: absolute; right: 4px; top: 3px; border: 3px solid transparent; border-bottom: 4px solid #333; border-top: 0; }
.n1 { width: 58px; margin-left: 10px; }
.n2 { width: 65px; margin-left: -5px; }
.box { display: block; width: 12px; height: 12px; border: 1px solid #888; background: #fff; flex: none; margin-right: 4px; }

.panel { flex: 0 0 347px; width: 347px; display: flex; flex-direction: column; background: #f0f0f0; }
.ph { flex: 0 0 14px; display: flex; justify-content: space-between; align-items: center; border-top: 1px solid #666; border-bottom: 1px solid #888; background: #e9e9e9; font-size: 13px; line-height: 12px; overflow: hidden; }
.ph-btns { display: flex; align-items: center; gap: 8px; }
.pin { width: 10px; height: 10px; display: block; }
.ph-x { font-size: 13px; width: 6px; overflow: hidden; }
.props { flex: 0 0 592px; margin-top: 2px; background: #fff; border-bottom: 1px solid #aaa; border-left: 1px solid #ccc; padding: 2px 0 0 1px; overflow: hidden; }
.grid { width: 346px; border-collapse: collapse; table-layout: fixed; font: 14.500px/15px "Liberation Mono", "Noto Sans CJK SC", monospace; }
.c0 { width: 20px; }
.c1 { width: 121px; }
.grid th { height: 22px; padding: 3px 0 0; font-weight: 400; border-right: 1px solid #b8b8b8; border-bottom: 1px solid #b8b8b8; background: linear-gradient(#fcfcfc, #e8e8e8); letter-spacing: .3px; }
.grid th:first-child { background: #efefef; }
.grid .hv { background: linear-gradient(#fbe6bb, #f3bf5f); color: #6a0a8a; }
.grid td { height: 19px; padding: 2px 0 0; border-right: 1px solid #b8b8b8; border-bottom: 1px solid #b8b8b8; white-space: nowrap; overflow: hidden; }
.grid .n { text-align: center; background: #f0f0f0; font-size: 13.500px; }
.grid .k { padding-left: 21px; }
.grid .v { padding-left: 3px; font-size: 13.500px; }
.b { color: #0000ff; }
.g { color: #8a8a8a; }
.grid .cur .n { background: #fcd79c; color: #6a0a8a; }
.cur .k { background: #3399ff; color: #d8ecff; }
.cur .v { background: #deedfc; }
.rb { display: inline-block; width: 11px; height: 15px; line-height: 15px; vertical-align: top; text-align: center; font-size: 12px; }
.plus { display: inline-block; width: 12px; height: 12px; margin: 0 6px 0 -18px; border: 1px solid #aaa; background: #eee; color: #111; font: 12px/10px "Liberation Mono", monospace; text-align: center; vertical-align: top; }

.preview { flex: 0 0 331px; margin: 5px 0 0 1px; background: #000; }
.sec { display: block; width: 346px; height: 331px; }
.p-white { fill: none; stroke: #fff; }
.p-thin { fill: none; stroke: #e8e8e8; }
.p-cy { fill: none; stroke: #19eef0; stroke-width: 2; }
.p-y { fill: #ffff00; }
.p-r { fill: #ff0000; }
.p-m { fill: #ff00ff; }
.p-cn { font: 22px "Noto Sans CJK SC", sans-serif; fill: #e8e8e8; }
.p-num { font: 24px "Liberation Serif", serif; fill: #f0f0f0; }
.p-red { fill: #ff0000; }
.p-title { font: 30px "Liberation Serif", serif; fill: #f0f0f0; letter-spacing: 2px; }
.p-ul { stroke: #fff; stroke-width: 1.500; fill: none; }

.speed { position: absolute; left: 295px; top: 959px; width: 158px; height: 60px; }
.pill { position: absolute; left: 30px; top: 7px; width: 128px; height: 56px; border-radius: 28px; background: linear-gradient(#fafafa, #dcdcdc); display: flex; padding-left: 30px; }
.sp-col { display: flex; flex-direction: column; gap: 0; padding-top: 5px; width: 65px; }
.sp-row { display: flex; justify-content: space-between; height: 19px; font: 12px/19px "Noto Sans", sans-serif; color: #222; }
.sp-row b { font-weight: 400; }
.up, .down { display: block; width: 8px; height: 10px; margin-top: 4px; }
.up { background: #f07058; clip-path: polygon(50% 0, 100% 50%, 70% 50%, 70% 100%, 30% 100%, 30% 50%, 0 50%); }
.down { background: #46b06a; clip-path: polygon(30% 0, 70% 0, 70% 50%, 100% 50%, 50% 100%, 0 50%, 30% 50%); }
.boost { position: relative; display: block; width: 22px; height: 22px; margin: 13px 0 0 3px; border-radius: 50%; background: #3c82d8; color: #fff; text-align: center; font: 700 20px/22px "Noto Sans", sans-serif; }
.dot { position: absolute; right: -3px; top: -3px; width: 10px; height: 10px; border-radius: 50%; background: #e03a3e; }
.ball { position: absolute; left: 0; top: 0; width: 61px; height: 61px; border-radius: 50%; border: 2px solid #d8d8d8; color: #fff; text-align: center; font: 18px/22px "Noto Sans", sans-serif; padding-top: 15px;
  background: radial-gradient(ellipse 18px 6px at 50% 10px, rgba(255, 255, 255, .45), rgba(255, 255, 255, 0)), linear-gradient(#0f7a50 0, #0a6e48 55%, #4fd060 56%); }
```
